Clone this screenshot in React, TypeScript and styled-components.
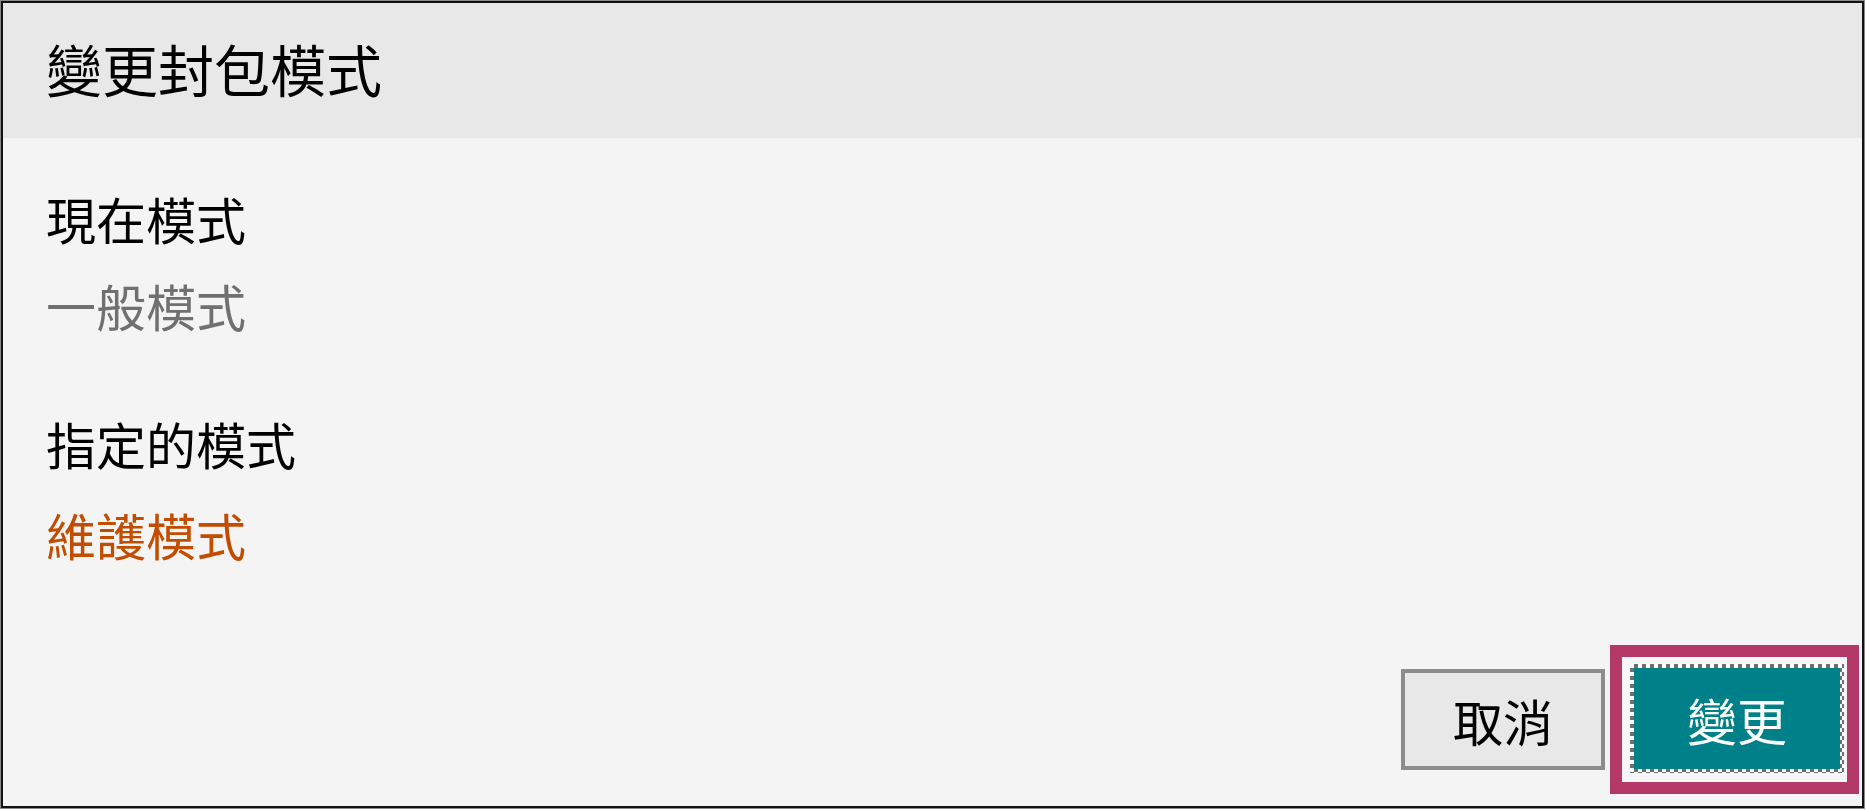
import styled, { createGlobalStyle } from 'styled-components';

const GlobalStyle = createGlobalStyle`
  html, body {
    margin: 0;
    padding: 0;
    background: #ffffff;
  }
  body {
    font-family: "Noto Sans CJK TC", "Noto Sans", sans-serif;
  }
`;

const Dialog = styled.div`
  box-sizing: border-box;
  margin: 1px;
  width: 1863px;
  height: 807px;
  border: 2px solid #111111;
  outline: 1px solid #8a8a8a;
  background: #f4f4f4;
  display: flex;
  flex-direction: column;
`;

const Header = styled.header`
  height: 135px;
  flex: none;
  display: flex;
  align-items: center;
  padding: 0 0 6px 43px;
  box-sizing: border-box;
  background: #e8e8e8;
`;

const Title = styled.h1`
  margin: 0;
  font-size: 56px;
  line-height: 1;
  font-weight: 400;
  color: #000000;
`;

const Body = styled.main`
  flex: 1;
  display: flex;
  flex-direction: column;
  padding: 55px 0 0 43px;
`;

const Label = styled.div`
  font-size: 50px;
  line-height: 1;
  color: #000000;
`;

const Value = styled.div<{ $tone: 'muted' | 'warn' }>`
  margin: ${(p) => (p.$tone === 'muted' ? '37px 0 88px' : '41px 0 0')};
  font-size: 50px;
  line-height: 1;
  color: ${(p) => (p.$tone === 'muted' ? '#707070' : '#c24d00')};
`;

const Footer = styled.footer`
  display: flex;
  justify-content: flex-end;
  align-items: center;
  gap: 5px;
  padding: 0 3px 12px 0;
`;

const CancelButton = styled.button`
  box-sizing: border-box;
  width: 204px;
  height: 101px;
  border: 4px solid #8c8c8c;
  background: #e8e8e8;
  color: #000000;
  font-family: inherit;
  font-size: 50px;
  line-height: 1;
  padding: 0;
`;

const FocusRing = styled.div`
  border: 12px solid #b33a68;
  padding: 7px 3px 9px 8px;
  background: #f6f6f6;
`;

const FocusDots = styled.div`
  padding: 4px;
  background: repeating-conic-gradient(#6e6e6e 0 25%, #ffffff 0 50%) 0 0 / 8px 8px;
`;

const ChangeButton = styled.button`
  display: block;
  box-sizing: border-box;
  width: 206px;
  height: 101px;
  border: none;
  background: #008088;
  color: #ffffff;
  font-family: inherit;
  font-size: 50px;
  line-height: 1;
  padding: 0;
`;

export default function App() {
  return (
    <>
      <GlobalStyle />
      <Dialog>
        <Header>
          <Title>變更封包模式</Title>
        </Header>
        <Body>
          <Label>現在模式</Label>
          <Value $tone="muted">一般模式</Value>
          <Label>指定的模式</Label>
          <Value $tone="warn">維護模式</Value>
        </Body>
        <Footer>
          <CancelButton type="button">取消</CancelButton>
          <FocusRing>
            <FocusDots>
              <ChangeButton type="button">變更</ChangeButton>
            </FocusDots>
          </FocusRing>
        </Footer>
      </Dialog>
    </>
  );
}
